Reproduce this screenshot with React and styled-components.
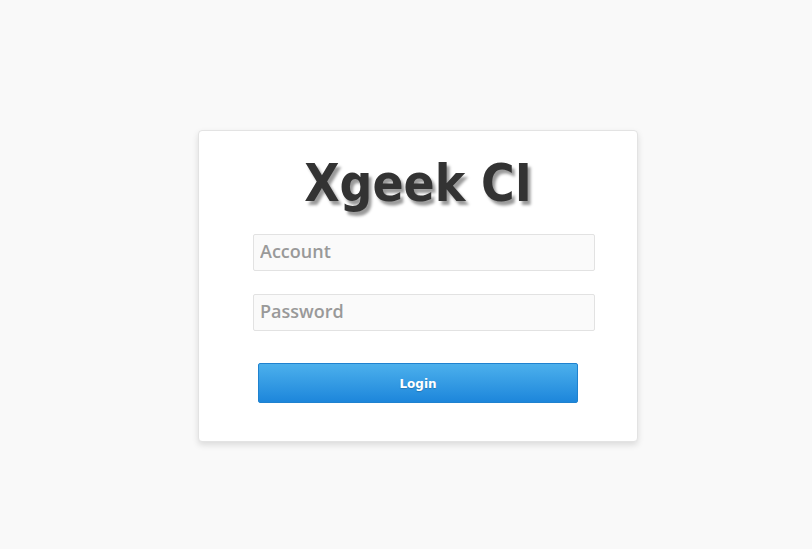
import React from 'react';
import styled, { createGlobalStyle } from 'styled-components';

const GlobalStyle = createGlobalStyle`
  html, body {
    margin: 0;
    padding: 0;
    background: #f9f9f9;
  }
  body {
    font-family: "DejaVu Sans Condensed", "DejaVu Sans", sans-serif;
  }
`;

const App = () => (
  <>
    <GlobalStyle />
    <Page>
      <Card>
        <Title>Xgeek CI</Title>
        <Form onSubmit={(e) => e.preventDefault()}>
          <Input type="text" placeholder="Account" />
          <Input type="password" placeholder="Password" />
          <Button type="submit">Login</Button>
        </Form>
      </Card>
    </Page>
  </>
);

const Page = styled.div`
  width: 100%;
  height: 549px;
  display: flex;
  justify-content: center;
  padding: 130px 0 0 24px;
  box-sizing: border-box;
`;

const Card = styled.div`
  width: 440px;
  height: 312px;
  box-sizing: border-box;
  background: #fff;
  border: 1px solid #e3e3e3;
  border-radius: 4px;
  box-shadow: 0 3px 6px rgba(0, 0, 0, 0.12);
  padding: 23px 0 0 0;
`;

const Title = styled.h1`
  margin: 0;
  font-family: "DejaVu Sans Condensed", "DejaVu Sans", sans-serif;
  font-size: 51px;
  font-weight: 700;
  line-height: 60px;
  color: #333;
  text-align: center;
  text-shadow: 3px 4px 3px rgba(0, 0, 0, 0.4);
`;

const Form = styled.form`
  display: flex;
  flex-direction: column;
  align-items: flex-start;
  padding-left: 54px;
  margin-top: 20px;
`;

const Input = styled.input`
  width: 342px;
  height: 37px;
  box-sizing: border-box;
  margin: 0 0 23px 0;
  padding: 0 0 3px 6px;
  border: 1px solid #e2e2e2;
  border-radius: 2px;
  background: #fafafa;
  font-family: "Open Sans", "Liberation Sans", sans-serif;
  font-size: 18px;
  font-weight: 600;
  color: #555;
  outline: none;
  &::placeholder {
    color: #999;
  }
`;

const Button = styled.button`
  margin: 9px 0 0 5px;
  width: 320px;
  height: 40px;
  padding: 2px 0 0 0;
  border: 1px solid #1f82cf;
  border-radius: 2px;
  background: linear-gradient(to bottom, #4cb0ec, #1d86db);
  color: #fff;
  font-family: "DejaVu Sans", Verdana, sans-serif;
  font-size: 12px;
  font-weight: 700;
  text-shadow: 0 1px 1px rgba(0, 0, 0, 0.2);
  cursor: pointer;
`;

export default App;
